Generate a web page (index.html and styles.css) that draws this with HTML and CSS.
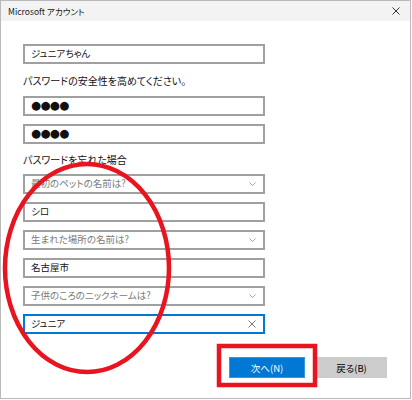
FILE: index.html
```html
<!DOCTYPE html>
<html lang="ja">
<head>
<meta charset="utf-8">
<title>Microsoft アカウント</title>
<link rel="stylesheet" href="styles.css">
</head>
<body>
<div class="window">
  <div class="titlebar">
    <span class="title">Microsoft アカウント</span>
    <svg class="close" width="8" height="8" viewBox="0 0 8 8"><path d="M0.5 0.5L7.5 7.5M7.5 0.5L0.5 7.5" stroke="#333" stroke-width="1" fill="none"/></svg>
  </div>
  <div class="content">
    <div class="field">ジュニアちゃん</div>
    <div class="label label-first">パスワードの安全性を高めてください。</div>
    <div class="field pw">●●●●</div>
    <div class="field pw">●●●●</div>
    <div class="label label-second">パスワードを忘れた場合</div>
    <div class="field select"><span>最初のペットの名前は?</span><svg class="chev" width="7" height="4" viewBox="0 0 7 4"><path d="M0.5 0.5L3.5 3.5L6.5 0.5" stroke="#999" stroke-width="0.9" fill="none"/></svg></div>
    <div class="field">シロ</div>
    <div class="field select"><span>生まれた場所の名前は?</span><svg class="chev" width="7" height="4" viewBox="0 0 7 4"><path d="M0.5 0.5L3.5 3.5L6.5 0.5" stroke="#999" stroke-width="0.9" fill="none"/></svg></div>
    <div class="field">名古屋市</div>
    <div class="field select"><span>子供のころのニックネームは?</span><svg class="chev" width="7" height="4" viewBox="0 0 7 4"><path d="M0.5 0.5L3.5 3.5L6.5 0.5" stroke="#999" stroke-width="0.9" fill="none"/></svg></div>
    <div class="field focused"><span>ジュニア</span><svg class="clear" width="8" height="8" viewBox="0 0 8 8"><path d="M0.5 0.5L7.5 7.5M7.5 0.5L0.5 7.5" stroke="#666" stroke-width="0.9" fill="none"/></svg></div>
  </div>
  <div class="buttons">
    <div class="btn primary">次へ(N)</div>
    <div class="btn secondary">戻る(B)</div>
  </div>
  <svg class="annot" width="412" height="400" viewBox="0 0 412 400">
    <ellipse cx="87" cy="268" rx="82" ry="104" fill="none" stroke="#e8141f" stroke-width="4.5"/>
    <rect x="219" y="346" width="96" height="39" fill="none" stroke="#e8141f" stroke-width="4.5"/>
  </svg>
</div>
</body>
</html>
```

FILE: styles.css
```css
* { box-sizing: border-box; }
html, body { margin: 0; padding: 0; background: #ffffff; }
body {
  font-family: "Noto Sans CJK JP", "Noto Sans", sans-serif;
  color: #000;
}
.window {
  position: relative;
  width: 411px;
  height: 399px;
  border: 1px solid #b9b9b9;
  background: #fff;
  overflow: hidden;
}
.titlebar {
  height: 20px;
  background: #f3f3f3;
  display: flex;
  align-items: center;
  justify-content: space-between;
  padding: 0 10px 0 7px;
}
.title {
  font-size: 8.5px;
  color: #1a1a1a;
  font-feature-settings: "palt";
}
.close { display: block; }
.content {
  display: flex;
  flex-direction: column;
  gap: 8px;
  padding: 23px 0 0 22px;
}
.field {
  width: 242px;
  height: 20px;
  border: 2px solid #a0a0a0;
  display: flex;
  align-items: center;
  justify-content: space-between;
  padding: 0 7px 0 6px;
  font-size: 9.5px;
  font-feature-settings: "palt";
  color: #111;
  line-height: 1;
}
.field.pw {
  font-family: "DejaVu Sans", sans-serif;
  font-size: 11.5px;
  letter-spacing: -0.6px;
}
.field.select { color: #7a7a7a; }
.field.focused { border-color: #0078d4; }
.label {
  font-size: 10px;
  font-feature-settings: "palt";
  color: #111;
  display: flex;
  align-items: center;
}
.label-first { height: 16px; margin: 0; }
.label-second { height: 14px; margin: 0; }
.chev, .clear { display: block; }
.buttons {
  display: flex;
  justify-content: flex-end;
  gap: 11px;
  padding: 23px 23px 0 0;
}
.btn {
  height: 21px;
  display: flex;
  align-items: center;
  justify-content: center;
  font-size: 9.5px;
  font-feature-settings: "palt";
}
.btn.primary {
  width: 76px;
  background: #0078d4;
  color: #fff;
  border: 1px solid #3c95dd;
}
.btn.secondary {
  width: 71px;
  background: #cccccc;
  color: #000;
}
.annot {
  position: absolute;
  left: -1px;
  top: -1px;
  pointer-events: none;
}
```
